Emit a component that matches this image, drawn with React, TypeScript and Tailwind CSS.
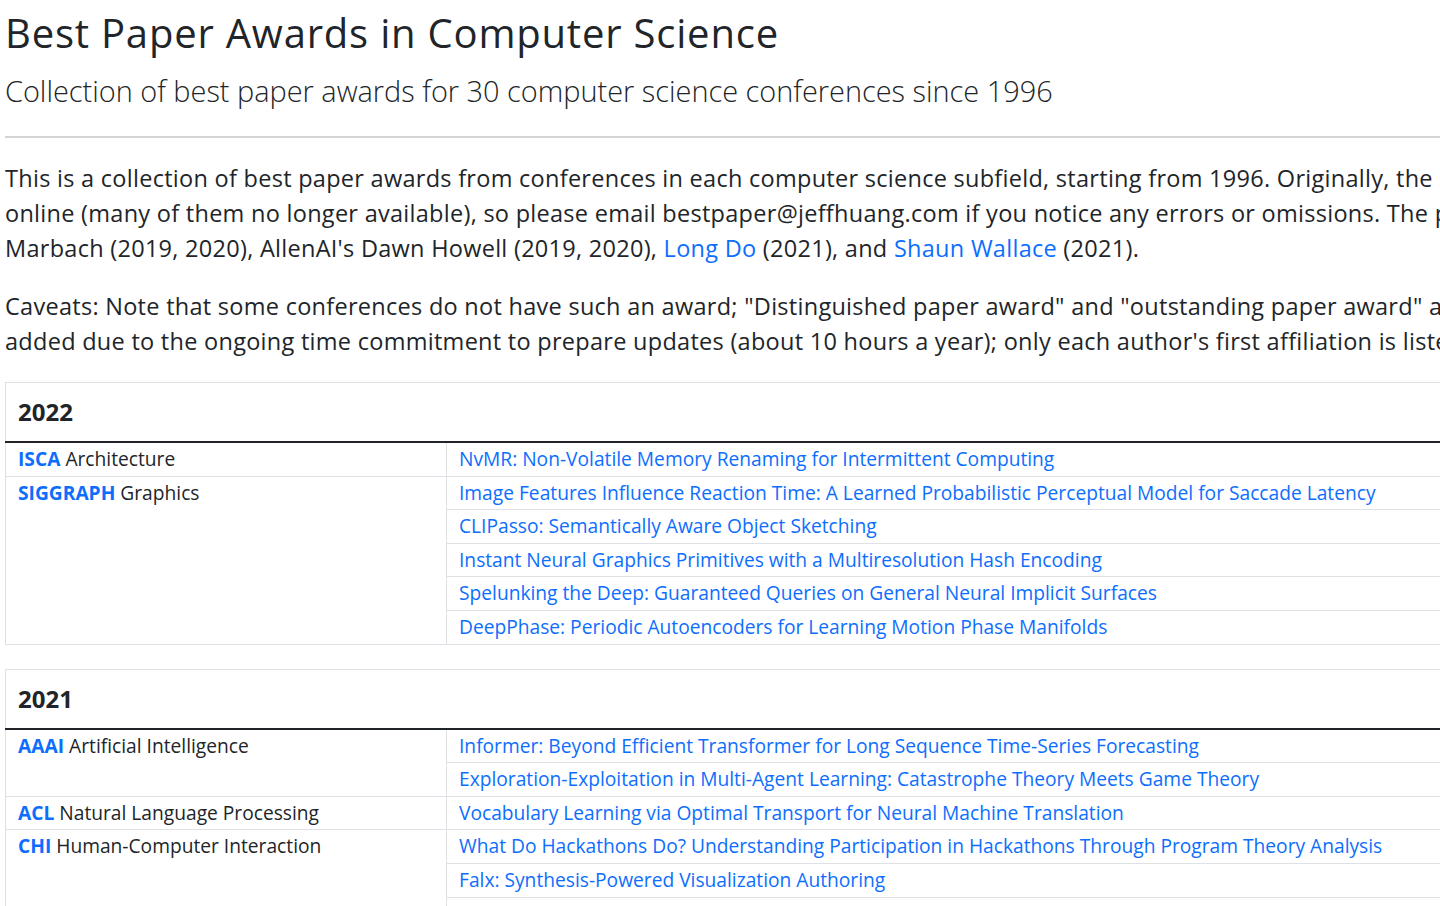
import React from 'react';

type Paper = { title: string };
type Entry = { conf: string; field: string; papers: Paper[] };
type Year = { year: string; entries: Entry[] };

const years: Year[] = [
    {
        year: '2022',
        entries: [
            { conf: 'ISCA', field: 'Architecture', papers: [{ title: 'NvMR: Non-Volatile Memory Renaming for Intermittent Computing' }] },
            {
                conf: 'SIGGRAPH',
                field: 'Graphics',
                papers: [
                    { title: 'Image Features Influence Reaction Time: A Learned Probabilistic Perceptual Model for Saccade Latency' },
                    { title: 'CLIPasso: Semantically Aware Object Sketching' },
                    { title: 'Instant Neural Graphics Primitives with a Multiresolution Hash Encoding' },
                    { title: 'Spelunking the Deep: Guaranteed Queries on General Neural Implicit Surfaces' },
                    { title: 'DeepPhase: Periodic Autoencoders for Learning Motion Phase Manifolds' },
                ],
            },
        ],
    },
    {
        year: '2021',
        entries: [
            {
                conf: 'AAAI',
                field: 'Artificial Intelligence',
                papers: [
                    { title: 'Informer: Beyond Efficient Transformer for Long Sequence Time-Series Forecasting' },
                    { title: 'Exploration-Exploitation in Multi-Agent Learning: Catastrophe Theory Meets Game Theory' },
                ],
            },
            { conf: 'ACL', field: 'Natural Language Processing', papers: [{ title: 'Vocabulary Learning via Optimal Transport for Neural Machine Translation' }] },
            {
                conf: 'CHI',
                field: 'Human-Computer Interaction',
                papers: [
                    { title: 'What Do Hackathons Do? Understanding Participation in Hackathons Through Program Theory Analysis' },
                    { title: 'Falx: Synthesis-Powered Visualization Authoring' },
                    { title: 'Beyond Show of Hands: Engaging Viewers via Expressive and Scalable Visual Communication in Live Streaming' },
                    { title: 'Unmaking: Enabling and Celebrating the Creative Material of Failure, Destruction, Decay, and Deformation' },
                ],
            },
        ],
    },
];

const link = 'text-[#0d6efd] no-underline';

const YearTable: React.FC<{ data: Year }> = ({ data }) => (
    <table className="w-[1800px] border-collapse mb-[24px] text-[19.2px] text-[#212529]">
        <thead>
            <tr>
                <th colSpan={2} className="border border-[#dee2e6] border-b-2 border-b-[#212529] text-left font-bold text-[24px] leading-[34px] py-[12px] px-[12px]">
                    {data.year}
                </th>
            </tr>
        </thead>
        <tbody>
            {data.entries.map(entry =>
                entry.papers.map((paper, i) => (
                    <tr key={entry.conf + i}>
                        {i === 0 && (
                            <td rowSpan={entry.papers.length} className="w-[441px] align-top border border-[#dee2e6] px-[12px] py-[4px] leading-[24.6px] whitespace-nowrap">
                                <a href="#" className={`${link} font-bold`}>{entry.conf}</a> {entry.field}
                            </td>
                        )}
                        <td className="border border-[#dee2e6] px-[12px] py-[4px] leading-[24.6px] whitespace-nowrap">
                            <a href="#" className={link}>{paper.title}</a>
                        </td>
                    </tr>
                ))
            )}
        </tbody>
    </table>
);

const App: React.FC = () => {
    return (
        <div className="w-[1440px] h-[906px] overflow-hidden bg-white font-['Open_Sans',sans-serif] text-[#212529]">
            <div className="w-[1900px] px-[5px]">
                <h1 className="text-[40px] leading-[48px] font-normal tracking-[0.8px] pt-[9px]">Best Paper Awards in Computer Science</h1>
                <h2 className="text-[28.9px] leading-[40px] font-light text-[#212529] mt-[14px]">
                    Collection of best paper awards for 30 computer science conferences since 1996
                </h2>
                <hr className="mt-[25px] mb-[23px] border-0 h-[2px] bg-[#d3d4d5]" />

                <div className="text-[23.5px] leading-[35px] tracking-[0.28px] mb-[23px] whitespace-nowrap">
                    <div>This is a collection of best paper awards from conferences in each computer science subfield, starting from 1996. Originally, the best paper awards were compiled by hand from conference websites and</div>
                    <div>online (many of them no longer available), so please email bestpaper@jeffhuang.com if you notice any errors or omissions. The project has been helped along by</div>
                    <div>
                        Marbach (2019, 2020), AllenAI's Dawn Howell (2019, 2020), <a href="#" className={link}>Long Do</a> (2021), and{' '}
                        <a href="#" className={link}>Shaun Wallace</a> (2021).
                    </div>
                </div>

                <div className="text-[23.5px] leading-[35px] tracking-[0.28px] mb-[23px] whitespace-nowrap">
                    <div>Caveats: Note that some conferences do not have such an award; "Distinguished paper award" and "outstanding paper award" are included when that is the top award; no new conferences will be</div>
                    <div>added due to the ongoing time commitment to prepare updates (about 10 hours a year); only each author's first affiliation is listed.</div>
                </div>

                {years.map(y => (
                    <YearTable key={y.year} data={y} />
                ))}
            </div>
        </div>
    );
};

export default App;
